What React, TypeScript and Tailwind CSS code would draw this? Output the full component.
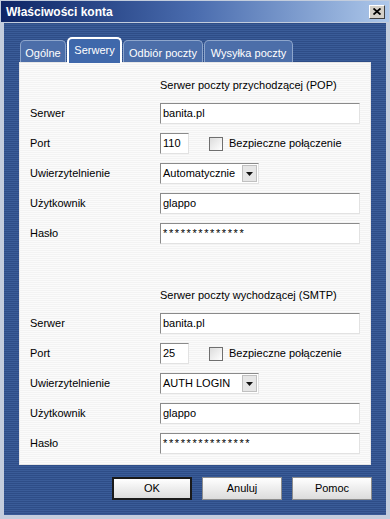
import React from 'react'

const stripes =
  'bg-[repeating-linear-gradient(180deg,#2e4d87_0px,#2e4d87_1px,#3a5c98_1px,#3a5c98_2px)]'

function TextBox({ value, width, pw }: { value: string; width: string; pw?: boolean }) {
  return (
    <div
      className={`${width} h-[21px] flex items-center bg-white border border-t-[#8a8a8a] border-l-[#8a8a8a] border-r-[#e2e2e2] border-b-[#e2e2e2] pl-[2px] text-black ${pw ? 'tracking-[1.6px]' : ''}`}
    >
      {value}
    </div>
  )
}

function Combo({ value }: { value: string }) {
  return (
    <div className="w-[99px] h-[21px] flex items-center bg-white border border-t-[#8a8a8a] border-l-[#8a8a8a] border-r-[#e2e2e2] border-b-[#e2e2e2] pl-[2px]">
      <span className="flex-1 text-black">{value}</span>
      <div className="w-[15px] h-[17px] mr-px flex items-center justify-center bg-[#e6e6e6] border border-[#c0c0c0]">
        <svg width="7" height="4" viewBox="0 0 7 4">
          <path d="M0 0h7L3.5 4z" fill="#111" />
        </svg>
      </div>
    </div>
  )
}

function Row({ label, children }: { label: string; children: React.ReactNode }) {
  return (
    <div className="flex items-center h-[21px]">
      <div className="w-[130px] text-black">{label}</div>
      {children}
    </div>
  )
}

function Section({
  title,
  port,
  auth,
  password,
}: {
  title: string
  port: string
  auth: string
  password: string
}) {
  return (
    <div className="flex flex-col gap-[9px]">
      <div className="pl-[130px] h-[13px] leading-[13px] mb-[2px] text-black">{title}</div>
      <Row label="Serwer">
        <TextBox value="banita.pl" width="w-[200px]" />
      </Row>
      <Row label="Port">
        <TextBox value={port} width="w-[29px]" />
        <div className="ml-[20px] w-[14px] h-[14px] bg-gradient-to-br from-[#dcdcdc] to-white border border-[#6f6f6f]" />
        <span className="ml-[6px] text-black">Bezpieczne połączenie</span>
      </Row>
      <Row label="Uwierzytelnienie">
        <Combo value={auth} />
      </Row>
      <Row label="Użytkownik">
        <TextBox value="glappo" width="w-[200px]" />
      </Row>
      <Row label="Hasło">
        <TextBox value={password} width="w-[200px]" pw />
      </Row>
    </div>
  )
}

function Tab({ label, active, width }: { label: string; active?: boolean; width: string }) {
  if (active) {
    return (
      <div
        className={`${width} h-[26px] -mb-[1px] flex items-start justify-center pt-[3px] bg-[#3f68ab] border-2 border-b-0 border-white rounded-t-[5px] text-white z-10`}
      >
        {label}
      </div>
    )
  }
  return (
    <div
      className={`${width} h-[22px] flex items-center justify-center pt-[3px] bg-[#4c6ea9] border border-b-0 border-[#8ea6cc] rounded-t-[5px] text-white`}
    >
      {label}
    </div>
  )
}

function Button({ label, primary }: { label: string; primary?: boolean }) {
  return (
    <div
      className={`w-[80px] h-[23px] flex items-center justify-center bg-gradient-to-b from-white to-[#dcdcdc] text-black ${
        primary ? 'border-2 border-[#1a1a1a]' : 'border border-[#8c8c8c]'
      }`}
    >
      {label}
    </div>
  )
}

export default function App() {
  return (
    <div className="w-[390px] h-[519px] flex flex-col bg-[#c3cddd] p-px font-['Liberation_Sans',Arial,sans-serif] text-[11px]">
      {/* Title bar */}
      <div className="h-[21px] flex items-center justify-between pl-[5px] pr-[4px] bg-gradient-to-r from-[#0e2566] via-[#4a6cae] to-[#aec8ea]">
        <span className="text-white font-bold text-[12px]">Właściwości konta</span>
        <div className="w-[16px] h-[14px] flex items-center justify-center bg-[#d4d0c8] border border-t-white border-l-white border-r-[#404040] border-b-[#404040]">
          <svg width="8" height="7" viewBox="0 0 8 7">
            <path d="M0.5 0.5L7.5 6.5M7.5 0.5L0.5 6.5" stroke="#000" strokeWidth="1.8" />
          </svg>
        </div>
      </div>

      {/* Body */}
      <div className={`flex-1 mt-px mx-[3px] mb-[3px] flex flex-col px-[15px] pt-[14px] ${stripes}`}>
        {/* Tabs */}
        <div className="flex items-end gap-px ml-px h-[25px]">
          <Tab label="Ogólne" width="w-[46px]" />
          <Tab label="Serwery" width="w-[55px]" active />
          <Tab label="Odbiór poczty" width="w-[80px]" />
          <Tab label="Wysyłka poczty" width="w-[89px]" />
        </div>

        {/* Panel */}
        <div className="h-[403px] bg-[repeating-linear-gradient(180deg,#fbfbfb_0px,#fbfbfb_1px,#f3f3f3_1px,#f3f3f3_2px)] border border-[#e6e6e6] pl-[10px] pt-[16px] flex flex-col">
          <Section
            title="Serwer poczty przychodzącej (POP)"
            port="110"
            auth="Automatycznie"
            password="**************"
          />
          <div className="h-[45px]" />
          <Section
            title="Serwer poczty wychodzącej (SMTP)"
            port="25"
            auth="AUTH LOGIN"
            password="***************"
          />
        </div>

        {/* Buttons */}
        <div className="flex justify-end gap-[10px] mt-[12px] -mr-px">
          <Button label="OK" primary />
          <Button label="Anuluj" />
          <Button label="Pomoc" />
        </div>
      </div>
    </div>
  )
}
